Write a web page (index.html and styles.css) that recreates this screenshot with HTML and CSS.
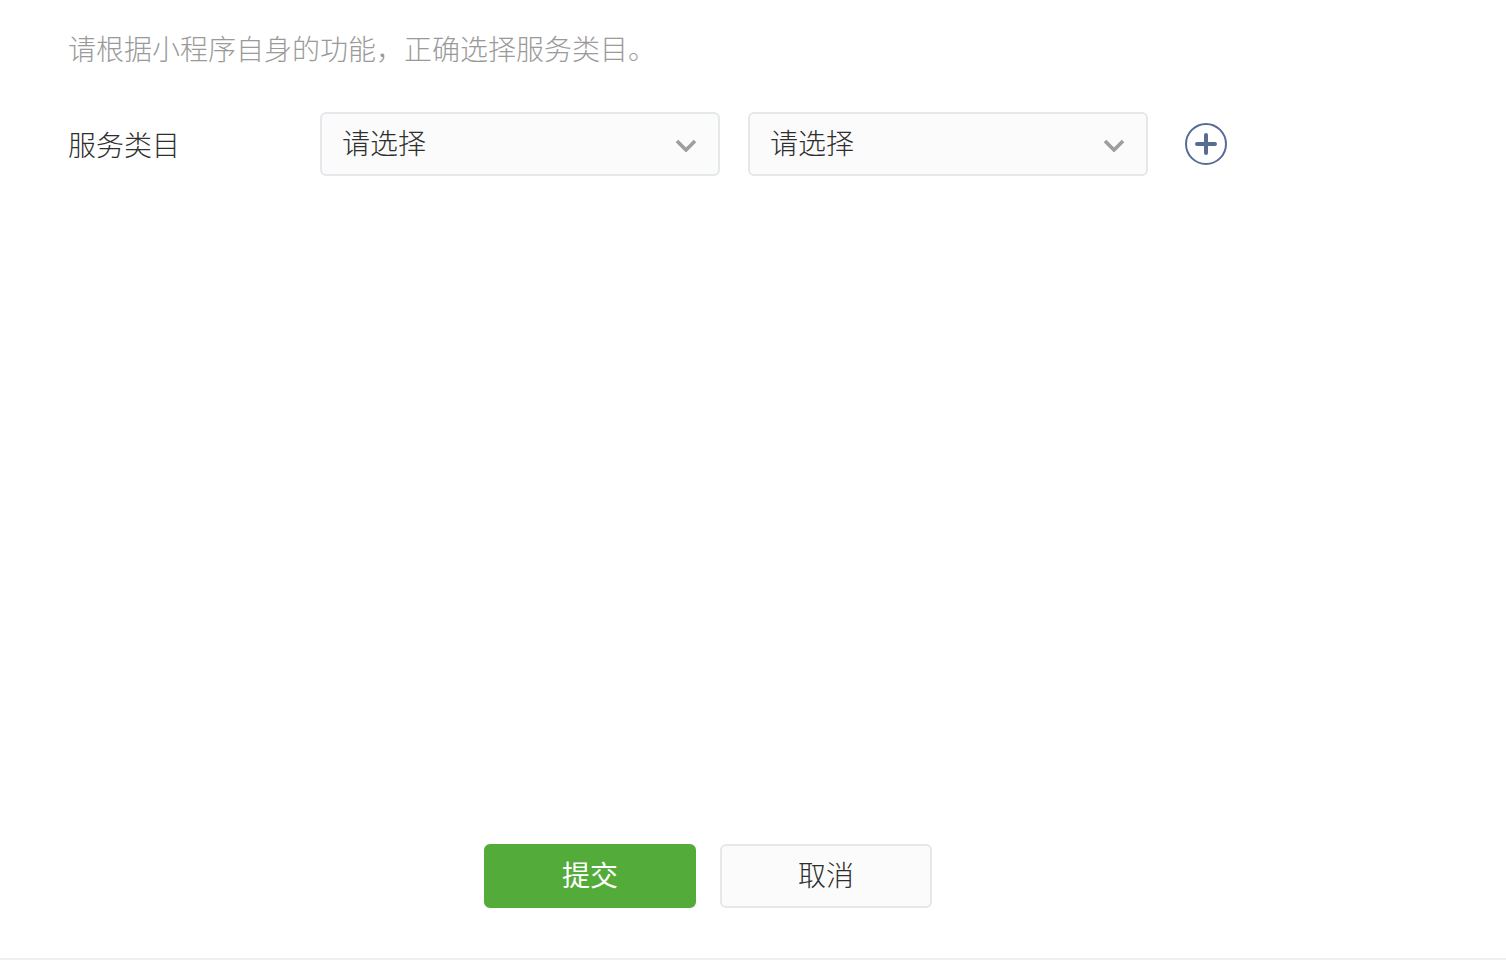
FILE: index.html
```html
<!DOCTYPE html>
<html lang="zh-CN">
<head>
<meta charset="utf-8">
<title>服务类目</title>
<link rel="stylesheet" href="styles.css">
</head>
<body>
<main class="page">
  <div class="content">
    <p class="desc">请根据小程序自身的功能，正确选择服务类目。</p>
    <div class="row">
      <span class="label">服务类目</span>
      <div class="select">
        <span>请选择</span>
        <svg class="arrow" width="22" height="14" viewBox="0 0 22 14"><path d="M2 3l9 9 9-9" fill="none" stroke="#9e9e9e" stroke-width="3.6"/></svg>
      </div>
      <div class="select">
        <span>请选择</span>
        <svg class="arrow" width="22" height="14" viewBox="0 0 22 14"><path d="M2 3l9 9 9-9" fill="none" stroke="#9e9e9e" stroke-width="3.6"/></svg>
      </div>
      <svg class="add" width="42" height="42" viewBox="0 0 42 42"><circle cx="21" cy="21" r="20" fill="none" stroke="#576b95" stroke-width="2"/><path d="M12 21h18M21 12v18" fill="none" stroke="#576b95" stroke-width="4" stroke-linecap="round"/></svg>
    </div>
  </div>
  <div class="actions">
    <button class="btn primary" type="button">提交</button>
    <button class="btn" type="button">取消</button>
  </div>
</main>
</body>
</html>
```
FILE: styles.css
```css
* { box-sizing: border-box; }
html, body { margin: 0; height: 100%; background: #fff; }
body {
  font-family: "Noto Sans CJK SC", "Liberation Sans", sans-serif;
  font-size: 28px;
  font-weight: 300;
  color: #2e2e2e;
  overflow: hidden;
}
.page {
  height: 960px;
  display: flex;
  flex-direction: column;
  border-bottom: 2px solid #eef0f2;
}
.content { flex: 1; padding: 28px 0 0 68px; }
.desc {
  margin: 0 0 44px;
  line-height: 40px;
  color: #9a9a9a;
}
.row { display: flex; align-items: flex-start; }
.label { width: 252px; line-height: 64px; }
.select {
  width: 400px;
  height: 64px;
  margin-right: 28px;
  padding: 0 22px 0 20px;
  display: flex;
  align-items: center;
  justify-content: space-between;
  background: #fbfbfb;
  border: 2px solid #e4e8eb;
  border-radius: 6px;
  line-height: 58px;
}
.select span { margin-top: -5px; }
.arrow { margin: 2px -1px 0 0; }
.add { margin: 11px 0 0 9px; }
.actions {
  display: flex;
  justify-content: center;
  gap: 24px;
  padding: 0 90px 50px 0;
}
.btn {
  width: 212px;
  height: 64px;
  padding: 0 0 4px;
  font: inherit;
  color: #2e2e2e;
  background: #fbfbfb;
  border: 2px solid #e4e8eb;
  border-radius: 6px;
}
.primary {
  color: #fff;
  font-weight: 400;
  background: #53ab39;
  border-color: #53ab39;
}
```
